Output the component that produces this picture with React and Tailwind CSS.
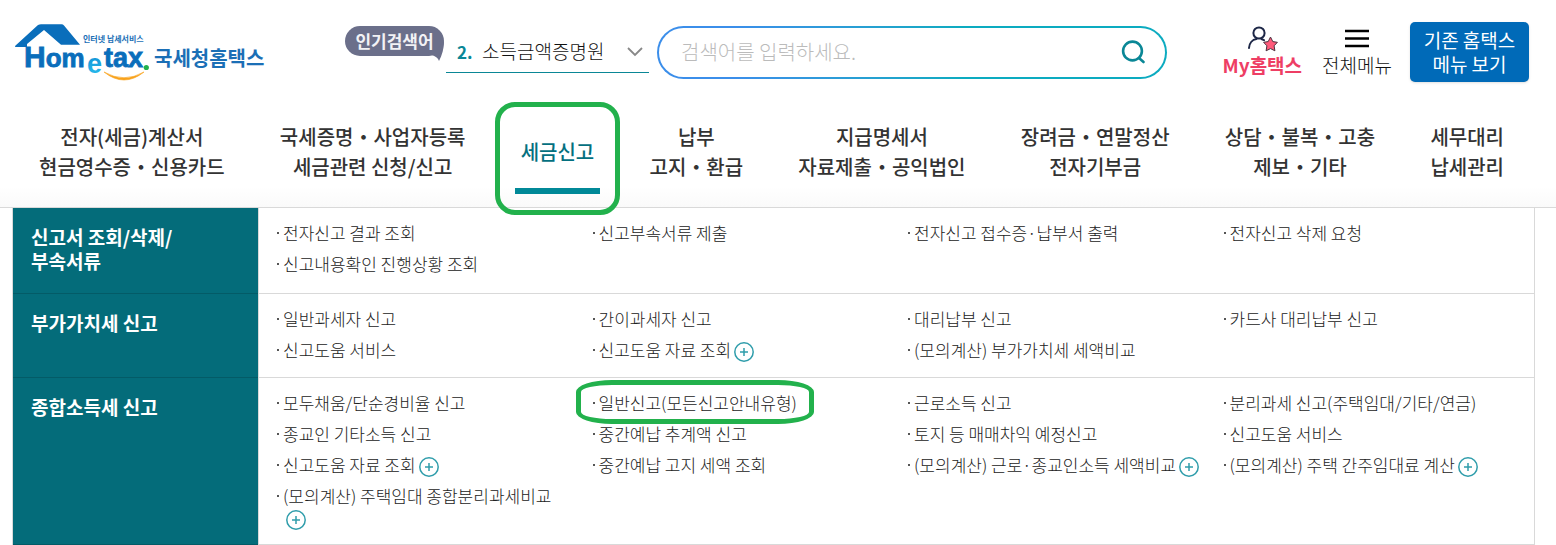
import { clsx } from 'clsx';

const NAV_ITEMS = [
  { lines: ['전자(세금)계산서', '현금영수증・신용카드'] },
  { lines: ['국세증명・사업자등록', '세금관련 신청/신고'] },
  { lines: ['세금신고'], active: true },
  { lines: ['납부', '고지・환급'] },
  { lines: ['지급명세서', '자료제출・공익법인'] },
  { lines: ['장려금・연말정산', '전자기부금'] },
  { lines: ['상담・불복・고충', '제보・기타'] },
  { lines: ['세무대리', '납세관리'] },
];

const SECTIONS = [
  {
    title: ['신고서 조회/삭제/', '부속서류'],
    columns: [
      [{ label: '전자신고 결과 조회' }, { label: '신고내용확인 진행상황 조회' }],
      [{ label: '신고부속서류 제출' }],
      [{ label: '전자신고 접수증·납부서 출력' }],
      [{ label: '전자신고 삭제 요청' }],
    ],
  },
  {
    title: ['부가가치세 신고'],
    columns: [
      [{ label: '일반과세자 신고' }, { label: '신고도움 서비스' }],
      [{ label: '간이과세자 신고' }, { label: '신고도움 자료 조회', more: true }],
      [{ label: '대리납부 신고' }, { label: '(모의계산) 부가가치세 세액비교' }],
      [{ label: '카드사 대리납부 신고' }],
    ],
  },
  {
    title: ['종합소득세 신고'],
    columns: [
      [
        { label: '모두채움/단순경비율 신고' },
        { label: '종교인 기타소득 신고' },
        { label: '신고도움 자료 조회', more: true },
        { label: '(모의계산) 주택임대 종합분리과세비교', more: true },
      ],
      [
        { label: '일반신고(모든신고안내유형)', marked: true },
        { label: '중간예납 추계액 신고' },
        { label: '중간예납 고지 세액 조회' },
      ],
      [
        { label: '근로소득 신고' },
        { label: '토지 등 매매차익 예정신고' },
        { label: '(모의계산) 근로·종교인소득 세액비교', more: true },
      ],
      [
        { label: '분리과세 신고(주택임대/기타/연금)' },
        { label: '신고도움 서비스' },
        { label: '(모의계산) 주택 간주임대료 계산', more: true },
      ],
    ],
  },
];

const Logo = () => (
  <a href="#home" aria-label="국세청홈택스" className="shrink-0">
    <svg width="258" height="60" viewBox="12 22 258 60">
      <defs>
        <linearGradient id="logo-e" x1="0" y1="0" x2="0" y2="1">
          <stop offset="0" stopColor="#0b86cf" />
          <stop offset="1" stopColor="#2cc3f0" />
        </linearGradient>
      </defs>
      <path d="M15 46 L38 25 Q39.5 24.2 41 24.2 H61.5 Q63 24.2 64 25.4 L80 44.8 H61 L44 30 L27 44 V47 H16 Q14.500 47 15 46 Z" fill="#0a6ebb" />
      <g fontFamily='"Liberation Sans", sans-serif' fontWeight="700" fontSize="27" fill="#0a6ebb" stroke="#0a6ebb">
        <text x="24" y="67" fontSize="30" strokeWidth="0.8">
          H<tspan fontSize="26">om</tspan>
        </text>
        <text x="104" y="67" strokeWidth="0.8">tax</text>
        <text x="87" y="73" fill="url(#logo-e)" stroke="none">e</text>
      </g>
      <circle cx="146.3" cy="67.5" r="2.6" fill="#22b14c" />
      <path d="M104 72 Q124 88 144 72 Q124 83.5 104 72 Z" fill="#f9a21b" stroke="#f9a21b" strokeWidth="0.6" />
      <g fontFamily='"Noto Sans CJK KR", sans-serif' fontWeight="700" fill="#1b6fb6">
        <text x="83" y="42" fontSize="8">인터넷 납세서비스</text>
        <text x="154" y="66" fontSize="20">국세청홈택스</text>
      </g>
    </svg>
  </a>
);

const UserStarIcon = () => (
  <svg width="32" height="26" viewBox="0 0 32 26" fill="none" aria-hidden="true">
    <circle cx="13" cy="7" r="5.6" stroke="#1d2747" strokeWidth="2" />
    <path d="M3 22 C3.3 17 6.5 13.6 10.500 13 M15.500 13 L18 14.200" stroke="#1d2747" strokeWidth="2" strokeLinecap="round" />
    <path
      d="M24.500 11 L26.800 15.600 L31.400 16.300 L28.100 19.800 L28.900 24.800 L24.500 22.600 L20.100 24.800 L20.900 19.800 L17.600 16.300 L22.200 15.600 Z"
      fill="#ff5a7a"
      stroke="#4a3340"
      strokeWidth="1"
      strokeLinejoin="round"
    />
  </svg>
);

const SearchIcon = () => (
  <svg width="24" height="24" viewBox="0 0 24 24" fill="none" stroke="#0a8796" strokeWidth="2.6" aria-hidden="true">
    <circle cx="11.500" cy="11" r="9.400" />
    <path d="M18 18 L22.500 22" strokeLinecap="round" />
  </svg>
);

const Header = () => (
  <header className="flex items-center pt-[22px] pr-[27px] pb-[22px] pl-3">
    <Logo />
    <div className="relative mt-1 ml-[75px] h-[30px] w-[99px] shrink-0 self-start rounded-full bg-[#6b6f8a] text-center text-[17px] leading-[29px] font-bold text-[#f2f2f5]">
      인기검색어
      <svg className="absolute right-0 bottom-[-5px]" width="12" height="20" viewBox="0 0 12 20" aria-hidden="true">
        <path d="M12 0 C12 8 10 14 7 20 C6 17 4 15.500 0 14 Z" fill="#6b6f8a" />
      </svg>
    </div>
    <div className="relative ml-[2px] flex h-[42px] w-[203px] shrink-0 items-center border-b border-[#0a8796] pl-[11px]">
      <label htmlFor="keyword" className="w-[25px] text-[17px] font-bold text-[#0a8796]">2.</label>
      <select id="keyword" className="flex-1 appearance-none bg-transparent text-[19px] font-light text-[#111]">
        <option>소득금액증명원</option>
      </select>
      <svg className="pointer-events-none absolute right-[6px]" width="16" height="10" viewBox="0 0 16 10" fill="none" stroke="#888" strokeWidth="1.800" aria-hidden="true">
        <path d="M1 1 L8 8 L15 1" />
      </svg>
    </div>
    <form className="ml-2 flex-1 rounded-full bg-linear-to-r from-[#3b8eea] from-15% to-[#0cabc0] to-60% p-[2px]">
      <div className="flex h-[49px] items-center rounded-full bg-white pr-5 pl-[22px]">
        <input
          type="text"
          aria-label="검색어"
          placeholder="검색어를 입력하세요."
          className="min-w-0 flex-1 text-[20px] font-light outline-none placeholder:text-[#bbb]"
        />
        <button type="button" aria-label="검색">
          <SearchIcon />
        </button>
      </div>
    </form>
    <a href="#my" className="ml-14 flex shrink-0 flex-col items-center text-[19px] leading-[26px] font-bold text-[#ee3e64]">
      <UserStarIcon />
      My홈택스
    </a>
    <button type="button" className="ml-5 flex shrink-0 flex-col items-center text-[19px] leading-[26px] font-light text-[#111]">
      <svg width="24" height="26" viewBox="0 0 24 26" stroke="#000" strokeWidth="2.500" aria-hidden="true">
        <path d="M0 5 H24 M0 12.500 H24 M0 20 H24" />
      </svg>
      전체메뉴
    </button>
    <button type="button" className="ml-[18px] h-[60px] w-[119px] shrink-0 rounded-[5px] bg-[#006ab8] text-[19px] leading-[24px] text-white shadow-sm">
      기존 홈택스
      <br />
      메뉴 보기
    </button>
  </header>
);

const MainNav = () => (
  <nav className="border-b border-[#d9d9d9] bg-linear-to-b from-white from-80% to-[#fafafa]">
    <ul className="flex justify-between pr-[52px] pl-[39px]">
      {NAV_ITEMS.map(({ lines, active }) => (
        <li key={lines[0]} className="relative">
          <a
            href="#menu"
            className={clsx(
              'flex h-[103px] flex-col justify-center pb-[7px] text-center text-[20px] leading-[30px] font-medium whitespace-nowrap',
              active ? 'text-[#04707f]' : 'text-[#333]'
            )}
          >
            {lines.map((line) => (
              <span key={line}>{line}</span>
            ))}
          </a>
          {active && (
            <>
              <span className="absolute -inset-x-[6px] bottom-[13px] h-[6px] bg-[#018998]" />
              <span className="absolute -inset-x-[26px] -top-[2px] -bottom-[8px] z-10 rounded-[20px] border-5 border-[#22b14c]" />
            </>
          )}
        </li>
      ))}
    </ul>
  </nav>
);

const MoreButton = ({ label }) => (
  <button type="button" aria-label={`${label} 더보기`} className="-my-1 ml-[3px] inline-block align-middle">
    <svg width="20" height="20" viewBox="0 0 20 20" fill="none" stroke="#2f9dab" strokeWidth="1.500" aria-hidden="true">
      <circle cx="10" cy="10" r="9.200" />
      <path d="M10 6 V14 M6 10 H14" />
    </svg>
  </button>
);

const MenuItem = ({ label, more, marked }) => (
  <li className="relative flex pr-4">
    <span className="mt-[10px] mr-1 ml-px size-[2px] shrink-0 bg-[#555]" />
    <div className="leading-[22px]">
      <a href="#item" className="whitespace-nowrap">{label}</a>
      {more && <MoreButton label={label} />}
    </div>
    {marked && (
      <span className="absolute -top-3 -left-4 h-[44px] w-[238px] rounded-[36px/12px] border-5 border-[#22b14c]" />
    )}
  </li>
);

const MegaMenu = () => (
  <div className="mr-[21px] ml-3 border-x border-[#d9d9d9]">
    {SECTIONS.map(({ title, columns }) => (
      <section key={title[0]} className="flex">
        <h2 className="w-[245px] shrink-0 border-b border-[#035b67] bg-[#046c7a] pt-[17px] pb-5 pl-[18px] text-[19px] leading-[24px] font-bold text-white">
          {title.map((line) => (
            <span key={line} className="block">{line}</span>
          ))}
        </h2>
        <div className="grid min-h-[84px] flex-1 grid-cols-4 gap-1 border-b border-l border-[#d9d9d9] pt-[14px] pb-[15px] pl-[17px] text-[17px] font-light text-[#222]">
          {columns.map((items) => (
            <ul key={items[0].label} className="flex flex-col gap-[9px]">
              {items.map((item) => (
                <MenuItem key={item.label} {...item} />
              ))}
            </ul>
          ))}
        </div>
      </section>
    ))}
  </div>
);

const App = () => (
  <div className="bg-white font-['Noto_Sans_CJK_KR',sans-serif]">
    <Header />
    <MainNav />
    <MegaMenu />
  </div>
);

export default App;
